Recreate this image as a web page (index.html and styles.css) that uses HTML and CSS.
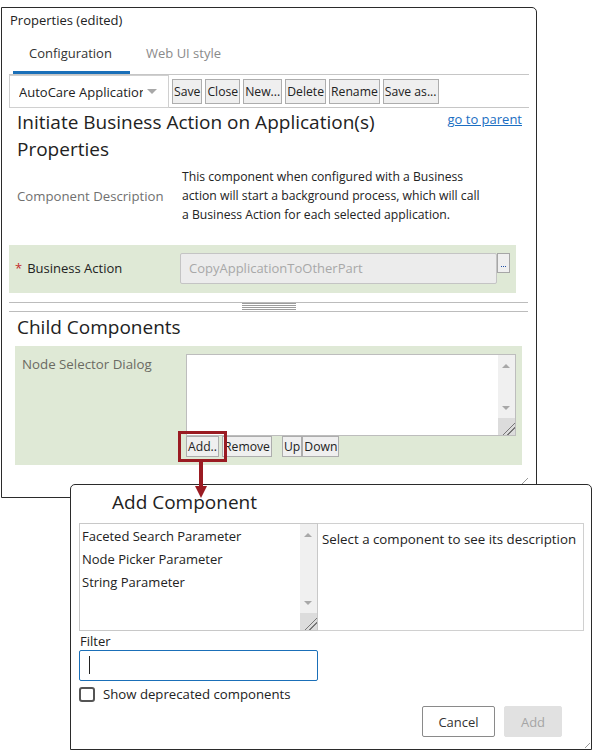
FILE: index.html
```html
<!DOCTYPE html>
<html>
<head>
<meta charset="utf-8">
<title>Properties</title>
<link rel="stylesheet" href="styles.css">
</head>
<body>
<div class="panel">
  <div class="panel-title">Properties (edited)</div>
  <div class="tabs">
    <div class="tab active">Configuration</div>
    <div class="tab">Web UI style</div>
  </div>
  <div class="toolbar">
    <div class="combo"><span class="combo-text">AutoCare Application</span><span class="combo-arrow"></span></div>
    <div class="tb-buttons">
      <button class="btn">Save</button>
      <button class="btn">Close</button>
      <button class="btn">New...</button>
      <button class="btn">Delete</button>
      <button class="btn">Rename</button>
      <button class="btn">Save as...</button>
    </div>
  </div>
  <div class="heading-row">
    <div class="heading">Initiate Business Action on Application(s)<br>Properties</div>
    <a class="parent-link" href="#">go to parent</a>
  </div>
  <div class="desc-row">
    <div class="desc-label">Component Description</div>
    <div class="desc-text">This component when configured with a Business<br>action will start a background process, which will call<br>a Business Action for each selected application.</div>
  </div>
  <div class="field-row">
    <div class="field-label"><span class="req">*</span>Business Action</div>
    <div class="field-input">CopyApplicationToOtherPart</div>
    <button class="dots-btn"><span class="dot"></span><span class="dot"></span><span class="dot"></span></button>
  </div>
  <div class="splitter"><div class="grip"></div></div>
  <div class="heading sub">Child Components</div>
  <div class="child-box">
    <div class="child-label">Node Selector Dialog</div>
    <div class="child-right">
      <div class="listbox child-list">
        <div class="list-items"></div>
        <div class="vscroll">
          <span class="sc-up"></span>
          <span class="sc-down"></span>
          <span class="sc-corner"></span>
        </div>
      </div>
      <div class="child-buttons">
        <button class="btn">Add..</button>
        <button class="btn">Remove</button>
        <button class="btn btn-up">Up</button>
        <button class="btn">Down</button>
      </div>
    </div>
  </div>
  <div class="highlight"></div>
  <div class="resize-grip"></div>
</div>

<div class="dialog">
  <div class="dialog-title">Add Component</div>
  <div class="dialog-lists">
    <div class="listbox comp-list">
      <div class="list-items">
        <div class="item">Faceted Search Parameter</div>
        <div class="item">Node Picker Parameter</div>
        <div class="item">String Parameter</div>
      </div>
      <div class="vscroll">
        <span class="sc-up"></span>
        <span class="sc-down"></span>
        <span class="sc-corner"></span>
      </div>
    </div>
    <div class="comp-desc">Select a component to see its description</div>
  </div>
  <div class="filter-label">Filter</div>
  <div class="filter-input"><span class="caret"></span></div>
  <label class="check-row"><span class="checkbox"></span>Show deprecated components</label>
  <div class="dialog-buttons">
    <button class="dbtn cancel">Cancel</button>
    <button class="dbtn add">Add</button>
  </div>
  <div class="resize-grip dlg-grip"></div>
</div>

<svg class="arrow" width="16" height="38" viewBox="0 0 16 38">
  <rect x="5" y="0" width="4" height="25" fill="#9a1b22"/>
  <polygon points="1,24 13,24 7,36" fill="#9a1b22"/>
</svg>
</body>
</html>
```

FILE: styles.css
```css
* { box-sizing: border-box; }
html, body { margin: 0; padding: 0; background: #fff; }
body {
  font-family: "Open Sans", "Noto Sans", sans-serif;
  font-size: 13px;
  color: #222;
  width: 592px;
  height: 751px;
  position: relative;
  overflow: hidden;
}
button { font-family: inherit; }

.panel {
  position: relative;
  margin: 7px 0 0 1px;
  width: 536px;
  height: 491px;
  border: 1px solid #2b2b2b;
  border-radius: 0 5px 0 0;
}
.panel-title {
  padding: 3px 0 0 8px;
  line-height: 18px;
  height: 21px;
  font-size: 13px;
  color: #222;
}
.tabs {
  display: flex;
  margin-left: 11px;
  height: 45px;
}
.tab {
  width: 117px;
  padding: 15px 0 0 16px;
  line-height: 18px;
  color: #8a8a8a;
  font-size: 13px;
}
.tab.active {
  color: #333;
  border-bottom: 3px solid #1a6fb8;
}
.toolbar {
  display: flex;
  align-items: center;
  margin-left: 7px;
  width: 520px;
  height: 34px;
  border-top: 1px solid #c6c6c6;
  border-bottom: 1px solid #c6c6c6;
}
.combo {
  width: 160px;
  height: 33px;
  margin-top: 1px;
  border: 1px solid #d0d0d0;
  display: flex;
  align-items: center;
  padding-left: 9px;
  position: relative;
  background: #fff;
}
.combo-text {
  width: 124px;
  overflow: hidden;
  white-space: nowrap;
  font-size: 13px;
  color: #222;
}
.combo-arrow {
  margin-left: 4px;
  width: 0; height: 0;
  border-left: 5px solid transparent;
  border-right: 5px solid transparent;
  border-top: 5px solid #a8a8a8;
}
.tb-buttons {
  display: flex;
  gap: 3px;
  margin-left: 3px;
}
.btn {
  height: 25px;
  padding: 0 1px;
  border: 1px solid #adadad;
  background: #efefef;
  color: #222;
  font-size: 12.2px;
  border-radius: 0;
  line-height: 21px;
}

.heading-row {
  display: flex;
  justify-content: space-between;
  align-items: flex-start;
  padding: 1px 14px 0 15px;
}
.heading {
  font-size: 19px;
  line-height: 27px;
  color: #222;
}
.parent-link {
  color: #1b6ec2;
  text-decoration: underline;
  font-size: 13px;
  line-height: 18px;
  margin-top: 1px;
}
.desc-row {
  display: flex;
  align-items: center;
  padding: 4px 0 0 15px;
}
.desc-label {
  width: 165px;
  color: #707070;
  font-size: 13.2px;
}
.desc-text {
  line-height: 19px;
  font-size: 12.2px;
  color: #222;
}

.field-row {
  display: flex;
  align-items: flex-start;
  margin: 21px 0 0 7px;
  width: 507px;
  height: 48px;
  background: #dfe9d6;
  padding-top: 8px;
}
.field-label {
  width: 171px;
  padding-left: 6px;
  line-height: 31px;
  font-size: 13px;
  color: #222;
}
.req {
  color: #c42b2b;
  margin-right: 5px;
}
.field-input {
  width: 317px;
  height: 31px;
  background: #ececec;
  border: 1px solid #c4c4c4;
  border-radius: 2px;
  color: #a8a8a8;
  font-size: 13px;
  line-height: 29px;
  padding-left: 8px;
}
.dots-btn {
  display: flex;
  justify-content: center;
  align-items: flex-end;
  gap: 1px;
  width: 13px;
  height: 20px;
  padding: 0 0 5px 0;
  border: 1px solid #a6a6a6;
  background: #efefef;
}
.dot {
  width: 1px;
  height: 1px;
  background: #1f4fa8;
}

.splitter {
  position: relative;
  margin: 9px 0 0 7px;
  width: 519px;
  height: 10px;
  border-top: 1px solid #bcbcbc;
  border-bottom: 1px solid #bcbcbc;
}
.grip {
  position: absolute;
  left: 233px;
  top: 0;
  width: 54px;
  height: 7px;
  background: repeating-linear-gradient(to bottom, #9c9c9c 0 1px, #fff 1px 2px);
}
.heading.sub {
  padding-left: 15px;
  margin-top: 2px;
}
.child-box {
  display: flex;
  margin: 5px 0 0 13px;
  width: 507px;
  height: 119px;
  background: #dfe9d6;
  padding: 8px 0 0 7px;
}
.child-label {
  width: 164px;
  color: #6b6b63;
  font-size: 13.3px;
  line-height: 20px;
}
.listbox {
  position: relative;
  border: 1px solid #bdbdbd;
  background: #fff;
}
.child-list {
  width: 330px;
  height: 82px;
}
.vscroll {
  position: absolute;
  right: 0;
  top: 0;
  bottom: 0;
  width: 17px;
  background: #f0f0f0;
}
.sc-up, .sc-down {
  position: absolute;
  left: 4px;
  width: 0; height: 0;
  border-left: 4px solid transparent;
  border-right: 4px solid transparent;
}
.sc-up { top: 9px; border-bottom: 4px solid #a8a8a8; }
.sc-down { bottom: 25px; border-top: 4px solid #a8a8a8; }
.sc-corner {
  position: absolute;
  left: 0; right: 0; bottom: 0;
  height: 17px;
  background:
    linear-gradient(135deg, transparent 0 62%, #777 62% 66%, transparent 66% 76%, #777 76% 80%, transparent 80%),
    #dcdcdc;
}
.child-buttons {
  display: flex;
  margin-top: 0;
}
.child-buttons .btn {
  height: 21px;
  line-height: 17px;
  margin-right: 3px;
}
.child-buttons .btn-up { margin-left: 7px; margin-right: 0; }

.highlight {
  position: absolute;
  left: 176px;
  top: 423px;
  width: 49px;
  height: 31px;
  border: 3px solid #9a1b22;
}
.resize-grip {
  position: absolute;
  right: 8px;
  bottom: 12px;
  width: 7px;
  height: 7px;
  background: linear-gradient(135deg, transparent 0 45%, #9a9a9a 45% 55%, transparent 55%);
}

.dialog {
  position: absolute;
  left: 70px;
  top: 484px;
  width: 522px;
  height: 266px;
  border: 1px solid #2b2b2b;
  border-radius: 5px 5px 0 0;
  background: #fff;
  padding: 4px 0 0 8px;
}
.dialog-title {
  padding-left: 33px;
  font-size: 19px;
  line-height: 27px;
  color: #222;
}
.dialog-lists {
  display: flex;
  margin-top: 7px;
}
.comp-list {
  width: 239px;
  height: 108px;
  border-color: #c8c8c8;
}
.comp-list .list-items {
  padding: 1px 0 0 2px;
}
.item {
  line-height: 23px;
  font-size: 13px;
  color: #222;
}
.comp-desc {
  width: 266px;
  height: 108px;
  border: 1px solid #d0d0d0;
  border-left: none;
  padding: 5px 0 0 4px;
  font-size: 13.3px;
  line-height: 20px;
  color: #222;
}
.filter-label {
  margin-top: 2px;
  padding-left: 1px;
  line-height: 16px;
  font-size: 13px;
  color: #222;
}
.filter-input {
  width: 239px;
  height: 31px;
  margin-top: 1px;
  border: 1px solid #1a6fb8;
  border-radius: 2px;
  padding: 5px 0 0 9px;
}
.caret {
  display: block;
  width: 1px;
  height: 18px;
  background: #222;
}
.check-row {
  display: flex;
  align-items: center;
  margin-top: 5px;
  font-size: 13.2px;
  color: #222;
  line-height: 16px;
}
.checkbox {
  width: 16px;
  height: 15px;
  border: 2px solid #555;
  border-radius: 3px;
  margin-right: 8px;
}
.dialog-buttons {
  display: flex;
  justify-content: flex-end;
  gap: 9px;
  padding-right: 29px;
  margin-top: 4px;
}
.dbtn {
  height: 31px;
  border-radius: 2px;
  font-size: 13px;
}
.cancel {
  width: 73px;
  border: 1px solid #8a8a8a;
  background: #fff;
  color: #333;
}
.add {
  width: 58px;
  border: 1px solid #e1e1e1;
  background: #e1e1e1;
  color: #a5a5a5;
}
.dlg-grip { right: 1px; bottom: 1px; width: 5px; height: 5px; }

.arrow {
  position: absolute;
  left: 194px;
  top: 462px;
}
```
